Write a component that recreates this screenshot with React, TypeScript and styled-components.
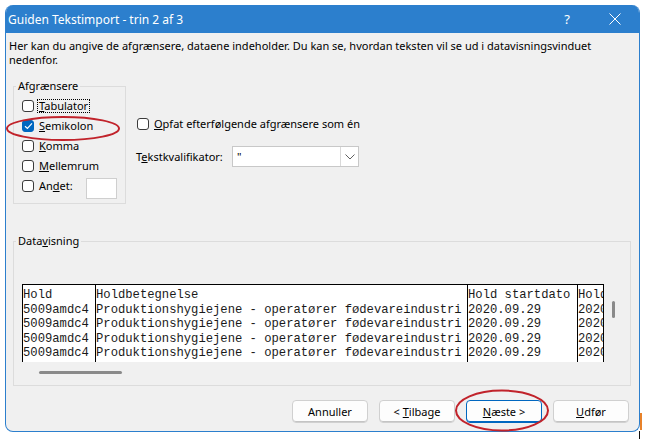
import styled, { createGlobalStyle } from "styled-components";

const GlobalStyle = createGlobalStyle`
  html, body {
    margin: 0;
    padding: 0;
    background: #fff;
  }
  body {
    font-family: "Segoe UI", "Noto Sans", sans-serif;
    font-size: 11px;
    color: #000;
  }
`;

const Page = styled.div`
  position: relative;
  width: 645px;
  height: 439px;
  padding: 5px 0 0 5px;
  box-sizing: border-box;
`;

const Window = styled.div`
  width: 635px;
  height: 427px;
  box-sizing: border-box;
  display: flex;
  flex-direction: column;
  background: #f0f0f0;
  border: 1px solid #2c7fcd;
  border-top: none;
  border-radius: 8px;
  overflow: hidden;
`;

const TitleBar = styled.div`
  height: 28px;
  flex: 0 0 auto;
  display: flex;
  align-items: center;
  background: #2c7fcd;
  color: #fff;
  padding-left: 3px;
  margin: 0 -1px;
`;

const Title = styled.div`
  flex: 1;
  font-size: 12px;
`;

const TitleButton = styled.div<{ $w: number }>`
  width: ${(p) => p.$w}px;
  height: 28px;
  display: flex;
  align-items: center;
  justify-content: center;
  font-size: 13px;
`;

const Content = styled.div`
  flex: 1;
  display: flex;
  flex-direction: column;
`;

const Intro = styled.p`
  margin: 6px 0 0 3px;
  width: 600px;
  line-height: 14px;
`;

const TopRow = styled.div`
  display: flex;
  margin-top: 12px;
`;

const Group = styled.fieldset<{ $w: number; $h: number }>`
  width: ${(p) => p.$w}px;
  height: ${(p) => p.$h}px;
  box-sizing: border-box;
  margin: 0 0 0 7px;
  padding: 0;
  border: 1px solid #dcdcdc;
  min-width: 0;
`;

const Legend = styled.legend`
  margin-left: 2px;
  padding: 0 2px;
  line-height: 14px;
`;

const CheckList = styled.div`
  display: flex;
  flex-direction: column;
  padding: 3px 0 0 8px;
`;

const CheckRow = styled.label`
  display: flex;
  align-items: center;
  height: 20px;
  gap: 4px;
`;

const Box = styled.span<{ $checked?: boolean }>`
  width: 12px;
  height: 12px;
  box-sizing: border-box;
  border-radius: 3px;
  border: 1px solid ${(p) => (p.$checked ? "#0067c0" : "#3b3b3b")};
  background: ${(p) => (p.$checked ? "#0067c0" : "#fff")};
  display: flex;
  align-items: center;
  justify-content: center;
`;

const Label = styled.span<{ $focus?: boolean }>`
  padding: 0 1px;
  line-height: 12px;
  outline: ${(p) => (p.$focus ? "1px dotted #000" : "none")};
`;

const OtherInput = styled.span`
  width: 31px;
  height: 21px;
  box-sizing: border-box;
  margin-left: 8px;
  margin-top: 5px;
  background: #fff;
  border: 1px solid #cfcfcf;
`;

const Options = styled.div`
  display: flex;
  flex-direction: column;
  margin: 35px 0 0 11px;
`;

const QualRow = styled.div`
  display: flex;
  align-items: center;
  margin: 12px 0 0 -1px;
`;

const QualLabel = styled.span`
  width: 96px;
`;

const Combo = styled.div`
  width: 127px;
  height: 21px;
  box-sizing: border-box;
  display: flex;
  background: #fff;
  border: 1px solid #c8c8c8;
`;

const ComboValue = styled.span`
  flex: 1;
  padding-left: 4px;
  line-height: 19px;
`;

const ComboArrow = styled.span`
  width: 17px;
  border-left: 1px solid #d9d9d9;
  display: flex;
  align-items: center;
  justify-content: center;
`;

const DataGroup = styled(Group)`
  margin-top: 30px;
`;

const DataArea = styled.div`
  display: flex;
  flex-direction: column;
  padding: 36px 0 0 8px;
`;

const GridRow = styled.div`
  display: flex;
`;

const Viewport = styled.div`
  width: 582px;
  height: 78px;
  box-sizing: border-box;
  display: flex;
  overflow: hidden;
  background: #fff;
  border: 1px solid #000;
  border-bottom: none;
  font-family: "Liberation Mono", "Courier New", monospace;
  font-size: 12.2px;
  color: #1a1a1a;
`;

const Column = styled.div<{ $w: number }>`
  flex: 0 0 ${(p) => p.$w}px;
  box-sizing: border-box;
  padding-top: 3px;
  border-right: 1px solid #000;
  white-space: pre;
  overflow: hidden;
`;

const Cell = styled.div`
  line-height: 14.6px;
  height: 14.6px;
`;

const VScroll = styled.div`
  margin-left: 8px;
  padding-top: 17px;
`;

const Thumb = styled.div<{ $w: number; $h: number }>`
  width: ${(p) => p.$w}px;
  height: ${(p) => p.$h}px;
  background: #8a8a8a;
  border-radius: 2px;
`;

const HScroll = styled.div`
  margin: 9px 0 0 17px;
`;

const ButtonRow = styled.div`
  display: flex;
  justify-content: flex-end;
  gap: 11px;
  margin: 14px 10px 0 0;
`;

const Button = styled.button<{ $default?: boolean }>`
  width: 76px;
  height: 23px;
  padding: 0;
  font: inherit;
  color: #000;
  background: #fdfdfd;
  border: 1px solid ${(p) => (p.$default ? "#0067c0" : "#d0d0d0")};
  box-shadow: ${(p) => (p.$default ? "inset 0 -1px 0 #0067c0" : "inset 0 -1px 0 #c4c4c4")};
  border-radius: 4px;
`;

const Annotation = styled.svg`
  position: absolute;
  left: 0;
  top: 0;
  pointer-events: none;
`;

const columns = [
  { w: 73, head: "Hold", cell: "5009amdc4" },
  { w: 372, head: "Holdbetegnelse", cell: "Produktionshygiejene - operatører fødevareindustri" },
  { w: 110, head: "Hold startdato", cell: "2020.09.29" },
  { w: 40, head: "Hold slutdato", cell: "2020.10.01" },
];

const Check = () => (
  <svg width="9" height="8" viewBox="0 0 9 8">
    <path d="M1 4.2 L3.4 6.4 L8 1.4" fill="none" stroke="#fff" strokeWidth="1.2" />
  </svg>
);

export default function App() {
  return (
    <Page>
      <GlobalStyle />
      <Window>
        <TitleBar>
          <Title>Guiden Tekstimport - trin 2 af 3</Title>
          <TitleButton $w={46}>?</TitleButton>
          <TitleButton $w={50}>
            <svg width="12" height="12" viewBox="0 0 12 12">
              <path d="M0.5 0.5 L11.5 11.5 M11.5 0.5 L0.5 11.5" stroke="#fff" strokeWidth="1" />
            </svg>
          </TitleButton>
        </TitleBar>
        <Content>
          <Intro>
            Her kan du angive de afgrænsere, dataene indeholder. Du kan se, hvordan teksten vil se ud i
            datavisningsvinduet nedenfor.
          </Intro>
          <TopRow>
            <Group $w={113} $h={125}>
              <Legend>Afgrænsere</Legend>
              <CheckList>
                <CheckRow>
                  <Box />
                  <Label $focus>
                    <u>T</u>abulator
                  </Label>
                </CheckRow>
                <CheckRow>
                  <Box $checked>
                    <Check />
                  </Box>
                  <Label>
                    <u>S</u>emikolon
                  </Label>
                </CheckRow>
                <CheckRow>
                  <Box />
                  <Label>
                    <u>K</u>omma
                  </Label>
                </CheckRow>
                <CheckRow>
                  <Box />
                  <Label>
                    <u>M</u>ellemrum
                  </Label>
                </CheckRow>
                <CheckRow>
                  <Box />
                  <Label>
                    An<u>d</u>et:
                  </Label>
                  <OtherInput />
                </CheckRow>
              </CheckList>
            </Group>
            <Options>
              <CheckRow>
                <Box />
                <Label>
                  <u>O</u>pfat efterfølgende afgrænsere som én
                </Label>
              </CheckRow>
              <QualRow>
                <QualLabel>
                  T<u>e</u>kstkvalifikator:
                </QualLabel>
                <Combo>
                  <ComboValue>"</ComboValue>
                  <ComboArrow>
                    <svg width="10" height="6" viewBox="0 0 10 6">
                      <path d="M0.5 0.5 L5 5 L9.5 0.5" fill="none" stroke="#606060" strokeWidth="1" />
                    </svg>
                  </ComboArrow>
                </Combo>
              </QualRow>
            </Options>
          </TopRow>
          <DataGroup $w={618} $h={152}>
            <Legend>
              Data<u>v</u>isning
            </Legend>
            <DataArea>
              <GridRow>
                <Viewport>
                  {columns.map((c) => (
                    <Column key={c.head} $w={c.w}>
                      <Cell>{c.head}</Cell>
                      {[0, 1, 2, 3].map((i) => (
                        <Cell key={i}>{c.cell}</Cell>
                      ))}
                    </Column>
                  ))}
                </Viewport>
                <VScroll>
                  <Thumb $w={3} $h={17} />
                </VScroll>
              </GridRow>
              <HScroll>
                <Thumb $w={83} $h={3} />
              </HScroll>
            </DataArea>
          </DataGroup>
          <ButtonRow>
            <Button>Annuller</Button>
            <Button>
              &lt; <u>T</u>ilbage
            </Button>
            <Button $default>
              <u>N</u>æste &gt;
            </Button>
            <Button>
              <u>U</u>dfør
            </Button>
          </ButtonRow>
        </Content>
      </Window>
      <Annotation width="645" height="439">
        <ellipse cx="63" cy="128.5" rx="56" ry="11.5" fill="none" stroke="#c1232b" strokeWidth="2" />
        <ellipse cx="502" cy="410.5" rx="46" ry="20" fill="none" stroke="#c1232b" strokeWidth="2" />
        <rect x="640" y="413" width="2" height="17" fill="#e8822a" />
        <rect x="639" y="431" width="1" height="8" fill="#111" />
      </Annotation>
    </Page>
  );
}
